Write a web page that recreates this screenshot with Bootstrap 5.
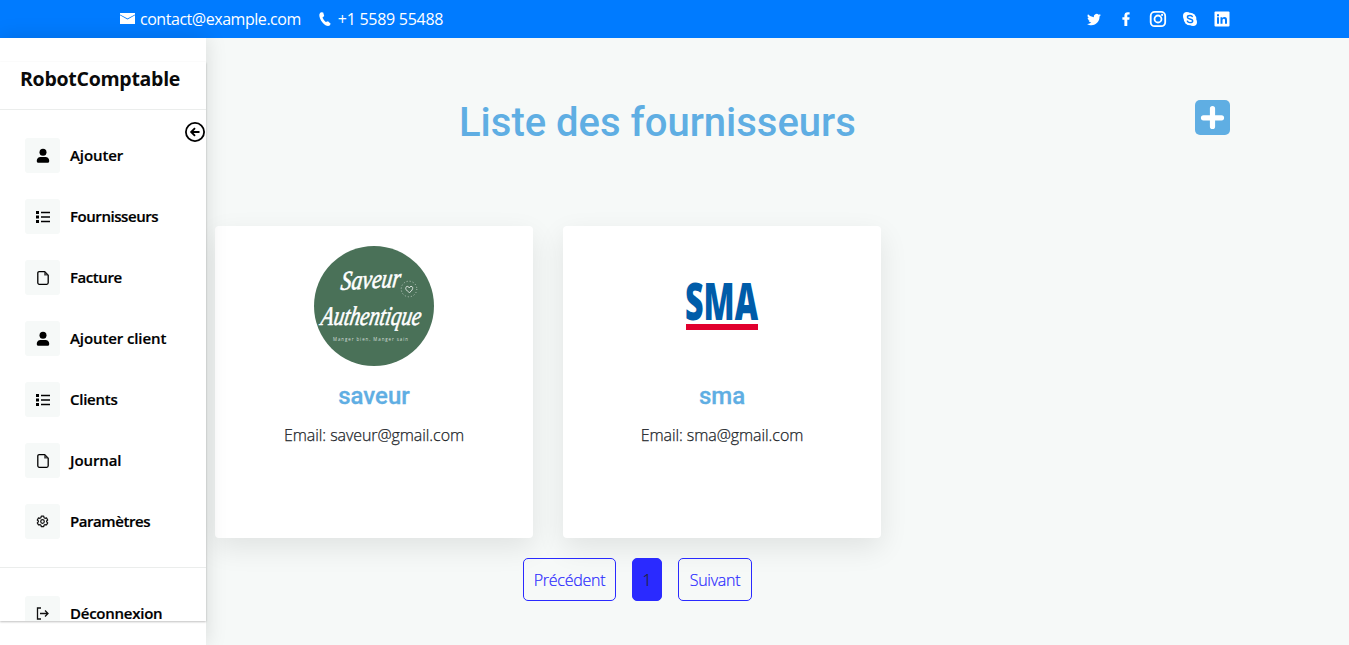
<!DOCTYPE html>
<html lang="fr">
<head>
<meta charset="utf-8">
<meta name="viewport" content="width=device-width, initial-scale=1">
<title>RobotComptable</title>
<link href="https://cdn.jsdelivr.net/npm/bootstrap@5.3.0/dist/css/bootstrap.min.css" rel="stylesheet">
<style>
  body { font-family: "Open Sans", sans-serif; background: #f6f9f8; height: 645px; overflow: hidden; color: #212529; }
  svg { display: block; flex: none; overflow: visible; }
  .topbar { height: 38px; background: #007bff; color: #fff; padding: 0 119px 1px 120px; }
  .topbar .mail { letter-spacing: -.46px; margin-left: 5px; }
  .topbar .phone { letter-spacing: -.28px; margin-left: 5px; }
  .socials { gap: 16px; }
  .page-row { height: 607px; }
  .side { width: 206px; background: #fff; padding-top: 24px; box-shadow: 0 0 20px rgba(0,0,0,.13); z-index: 2; }
  .side-panel { height: 559px; overflow: hidden; box-shadow: 0 1px 2px rgba(0,0,0,.25); position: relative; }
  .brand { height: 48px; padding: 0 0 14px 20px; border-bottom: 1px solid #ebedec; font-size: 19.5px; font-weight: 700; letter-spacing: -.27px; color: #0a0a0a; }
  .toggle-btn { position: absolute; left: 184px; top: 59px; }
  .menu { padding: 28px 0 28px 25px; gap: 26px; border-bottom: 1px solid #ebedec; }
  .menu-item { height: 35px; gap: 10px; font-weight: 600; font-size: 15px; letter-spacing: -.1px; -webkit-text-stroke: .2px #000; color: #000; white-space: nowrap; }
  .menu-item.tight { letter-spacing: -.44px; }
  .menu-item.snug { letter-spacing: -.25px; }
  .icon-box { width: 35px; height: 35px; background: #f6f9f8; border-radius: 3px; flex: none; }
  .page-main { padding: 60px 119px 0 9px; }
  .page-main h1 { font: 500 40px/48px Roboto, sans-serif; color: #5faee3; margin: 1px 0 0; }
  .title-row { height: 128px; padding-left: 244px; }
  .cards { gap: 30px; }
  .supplier { width: 318px; height: 312px; background: #fff; border-radius: 4px; padding-top: 20px; box-shadow: 0 10px 29px rgba(0,0,0,.09); }
  .supplier h2 { font: 500 24px/28px Roboto, sans-serif; -webkit-text-stroke: .3px #5faee3; color: #5faee3; margin: 16px 0 13px; }
  .supplier-mail { font-weight: 300; letter-spacing: -.07px; -webkit-text-stroke: .25px #212529; }
  .pager { gap: 16px; margin: 20px 0 0 308px; }
  .pager a { height: 43px; border: 1px solid #2a2aff; border-radius: 5px; color: #2a2aff; text-decoration: none; font-weight: 300; letter-spacing: -.25px; -webkit-text-stroke: .2px currentColor; }
  .pager .prev { width: 93px; }
  .pager .next { width: 74px; }
  .pager .cur { width: 30px; background: #2a2aff; color: #212529; }
</style>
</head>
<body>
<svg width="0" height="0" class="position-absolute">
  <defs>
    <symbol id="user" viewBox="0 0 14 16"><circle cx="7" cy="4.300" r="3.500"/><path d="M.8 12.600C.8 10.300 2.400 8.900 4.400 8.900h5.200C11.600 8.900 13.200 10.300 13.200 12.600V13.300c0 .9-.6 1.500-1.500 1.500h-9.400C1.400 14.800.8 14.200.8 13.300z"/></symbol>
    <symbol id="list" viewBox="0 0 15 14"><path d="M1 1h3v3H1zM1 5.500h3v3H1zM1 10h3v3H1zM6 1.700h9v1.600H6zM6 6.200h9v1.600H6zM6 10.700h9v1.600H6z"/></symbol>
    <symbol id="file" viewBox="0 0 14 16"><path d="M3.100 1.700h5.600L12.200 5.200v7.600a1.500 1.500 0 0 1-1.500 1.500H3.300a1.500 1.500 0 0 1-1.500-1.500V3A1.300 1.300 0 0 1 3.100 1.700z" fill="none" stroke="#000" stroke-width="1.300"/><path d="M8.200 1.500l4.200 4H8.200z" fill="#444"/></symbol>
    <symbol id="gear" viewBox="0 0 16 16"><g fill="none" stroke="#111" stroke-width="1.500" stroke-linejoin="round"><circle cx="8" cy="8" r="2.200"/><path d="M6.500 1.500h3l.4 1.800 1.300.8 1.700-.5 1.500 2.600-1.300 1.200v1.100l1.300 1.200-1.500 2.600-1.700-.5-1.300.8-.4 1.800h-3l-.4-1.800-1.300-.8-1.700.5-1.500-2.600 1.300-1.200V7.400L1.600 6.200l1.500-2.600 1.700.5 1.300-.8z"/></g></symbol>
  </defs>
</svg>

<header class="topbar d-flex align-items-center justify-content-between">
  <div class="d-flex align-items-center">
    <svg width="15" height="11" viewBox="0 0 15 11" fill="#fff"><path d="M0 0h15v1.400L7.500 5.400 0 1.400zM0 2.300l7.500 4.100L15 2.300V11H0z"/></svg>
    <span class="mail">contact@example.com</span>
    <svg class="ms-3" width="16" height="16" viewBox="0 0 16 16" fill="#fff"><path d="M4.200 1.200 6.200 1.500 7.200 5 5.500 6.600C6.300 8.500 7.300 9.900 8.800 11.100L11 10.300 13.700 12.800 12.700 14.600C10.800 15.600 8.200 14.700 5.900 12 3.200 9 1.900 5.500 2.400 3.300 2.700 2.300 3.400 1.500 4.200 1.200z"/></svg>
    <span class="phone">+1 5589 55488</span>
  </div>
  <div class="socials d-flex align-items-center">
    <svg width="16" height="16" viewBox="0 0 16 16" fill="#fff"><path d="M5.400 14.200c5.200 0 8.100-4.400 8.100-8.200v-.4c.6-.4 1-.9 1.400-1.500-.5.200-1.100.4-1.600.5.600-.4 1-.9 1.200-1.600-.6.3-1.200.6-1.800.7A2.900 2.900 0 0 0 7.800 6.300 8.100 8.100 0 0 1 2 3.300a2.900 2.900 0 0 0 .9 3.800c-.5 0-.9-.1-1.300-.4 0 1.400 1 2.600 2.300 2.900-.4.1-.9.100-1.300 0 .4 1.200 1.500 2 2.700 2A5.700 5.700 0 0 1 1 12.900c1.300.8 2.800 1.300 4.400 1.300z"/></svg>
    <svg width="16" height="16" viewBox="0 0 16 16" fill="#fff"><path d="M6.400 15V8.800H4.400V6.200h2V4.500C6.400 2.400 7.700 1.200 9.600 1.200h2v2.300h-1.200C9.500 3.500 9.300 4 9.300 4.700v1.500h2.300l-.3 2.600h-2V15z"/></svg>
    <svg width="16" height="16" viewBox="0 0 16 16"><rect x=".7" y=".9" width="14.500" height="14.300" rx="4" fill="none" stroke="#fff" stroke-width="1.800"/><circle cx="8" cy="8" r="3.500" fill="none" stroke="#fff" stroke-width="1.800"/><circle cx="12.100" cy="3.900" r="1.100" fill="#fff"/></svg>
    <svg width="16" height="16" viewBox="0 0 16 16"><circle cx="8" cy="8" r="6.300" fill="#fff"/><circle cx="4.900" cy="4.900" r="3.900" fill="#fff"/><circle cx="11.100" cy="11.100" r="3.900" fill="#fff"/><path d="M10.600 6.200C10.300 4.900 9.200 4.500 8 4.500c-1.500 0-2.600.7-2.600 1.700C5.400 8.600 10.700 7.400 10.700 9.900c0 1-1.100 1.700-2.700 1.700s-2.600-.7-2.800-1.900" fill="none" stroke="#007bff" stroke-width="1.400"/></svg>
    <svg width="16" height="16" viewBox="0 0 16 16"><rect x=".5" y=".6" width="15" height="14.800" rx="1" fill="#fff"/><path d="M3 6.300h2v6.500H3zM3 3.300h2v1.900H3zM6.500 6.300h1.900v.9c.4-.7 1.100-1.100 2-1.100 2 0 2.600 1.200 2.600 3.100v3.600h-2V9.500c0-.9-.2-1.700-1.100-1.700-1 0-1.400.7-1.400 1.700v3.300h-2z" fill="#007bff"/></svg>
  </div>
</header>

<div class="page-row d-flex">
  <aside class="side flex-shrink-0 position-relative">
    <div class="side-panel">
      <div class="brand d-flex align-items-center">RobotComptable</div>
      <svg class="toggle-btn" width="22" height="22" viewBox="0 0 22 22" fill="none" stroke="#000" stroke-width="1.800"><circle cx="11" cy="11" r="9.100"/><path d="M15.500 11H7.500M11 7.200 7.200 11 11 14.800" stroke-width="1.900"/></svg>
      <nav class="menu d-flex flex-column">
        <div class="menu-item d-flex align-items-center"><span class="icon-box d-flex align-items-center justify-content-center"><svg width="14" height="16"><use href="#user"/></svg></span><span>Ajouter</span></div>
        <div class="menu-item tight d-flex align-items-center"><span class="icon-box d-flex align-items-center justify-content-center"><svg width="15" height="14"><use href="#list"/></svg></span><span>Fournisseurs</span></div>
        <div class="menu-item tight d-flex align-items-center"><span class="icon-box d-flex align-items-center justify-content-center"><svg width="14" height="16"><use href="#file"/></svg></span><span>Facture</span></div>
        <div class="menu-item d-flex align-items-center"><span class="icon-box d-flex align-items-center justify-content-center"><svg width="14" height="16"><use href="#user"/></svg></span><span>Ajouter client</span></div>
        <div class="menu-item snug d-flex align-items-center"><span class="icon-box d-flex align-items-center justify-content-center"><svg width="15" height="14"><use href="#list"/></svg></span><span>Clients</span></div>
        <div class="menu-item d-flex align-items-center"><span class="icon-box d-flex align-items-center justify-content-center"><svg width="14" height="16"><use href="#file"/></svg></span><span>Journal</span></div>
        <div class="menu-item tight d-flex align-items-center"><span class="icon-box d-flex align-items-center justify-content-center"><svg width="13" height="13"><use href="#gear"/></svg></span><span>Paramètres</span></div>
      </nav>
      <div class="menu border-0">
        <div class="menu-item snug d-flex align-items-center"><span class="icon-box d-flex align-items-center justify-content-center"><svg width="13" height="13" viewBox="0 0 13 13" fill="none" stroke="#111" stroke-width="1.300"><path d="M5 1H1.500v11H5M4 6.500h8M9 3.500l3 3-3 3"/></svg></span><span>Déconnexion</span></div>
      </div>
    </div>
  </aside>

  <main class="page-main flex-grow-1">
    <div class="title-row d-flex justify-content-between align-items-start">
      <h1>Liste des fournisseurs</h1>
      <svg style="margin-top:2px" width="35" height="35" viewBox="0 0 35 35"><rect width="35" height="35" rx="5" fill="#5faee3"/><path d="M17.500 8.500v18M8.500 17.800h18" stroke="#fff" stroke-width="5.200" stroke-linecap="round"/></svg>
    </div>
    <div class="cards d-flex">
      <div class="supplier d-flex flex-column align-items-center">
        <svg width="120" height="120" viewBox="0 0 120 120">
          <circle cx="60" cy="60" r="60" fill="#4a7158"/>
          <g fill="#fff" stroke="#fff" stroke-width=".6" font-family="'Liberation Serif', serif" font-style="italic">
            <text transform="translate(26 44) rotate(-3) skewX(-10)" font-size="27" textLength="60" lengthAdjust="spacingAndGlyphs">Saveur</text>
            <text transform="translate(6 79) skewX(-10)" font-size="27" textLength="100" lengthAdjust="spacingAndGlyphs">Authentique</text>
          </g>
          <circle cx="95" cy="43" r="7.800" fill="none" stroke="#c5d2c9" stroke-width=".9" stroke-dasharray="1 2.100"/>
          <path d="M95.500 46.500C92 44.500 91.200 42.500 92 41.200s2.600-1 3.200.6c.9-1.700 3-1.800 3.400-.5.500 1.500-.8 3.700-3.100 5.200z" fill="none" stroke="#fff" stroke-width=".8"/>
          <text x="19" y="95" font-family="'Open Sans', sans-serif" font-size="4.400" fill="#d5dfd8" textLength="75">Manger bien, Manger sain</text>
        </svg>
        <h2>saveur</h2>
        <div class="supplier-mail">Email: saveur@gmail.com</div>
      </div>
      <div class="supplier d-flex flex-column align-items-center">
        <svg width="120" height="120" viewBox="0 0 120 120">
          <text x="23" y="73.500" font-family="'Open Sans', sans-serif" font-weight="800" font-size="51" fill="#005ca9" textLength="73" lengthAdjust="spacingAndGlyphs">SMA</text>
          <rect x="24" y="78" width="72" height="6" fill="#e1002e"/>
        </svg>
        <h2>sma</h2>
        <div class="supplier-mail">Email: sma@gmail.com</div>
      </div>
    </div>
    <nav class="pager d-flex">
      <a href="#" class="prev d-flex align-items-center justify-content-center">Précédent</a>
      <a href="#" class="cur d-flex align-items-center justify-content-center">1</a>
      <a href="#" class="next d-flex align-items-center justify-content-center">Suivant</a>
    </nav>
  </main>
</div>
<script src="https://cdn.jsdelivr.net/npm/bootstrap@5.3.0/dist/js/bootstrap.bundle.min.js"></script>
</body>
</html>
